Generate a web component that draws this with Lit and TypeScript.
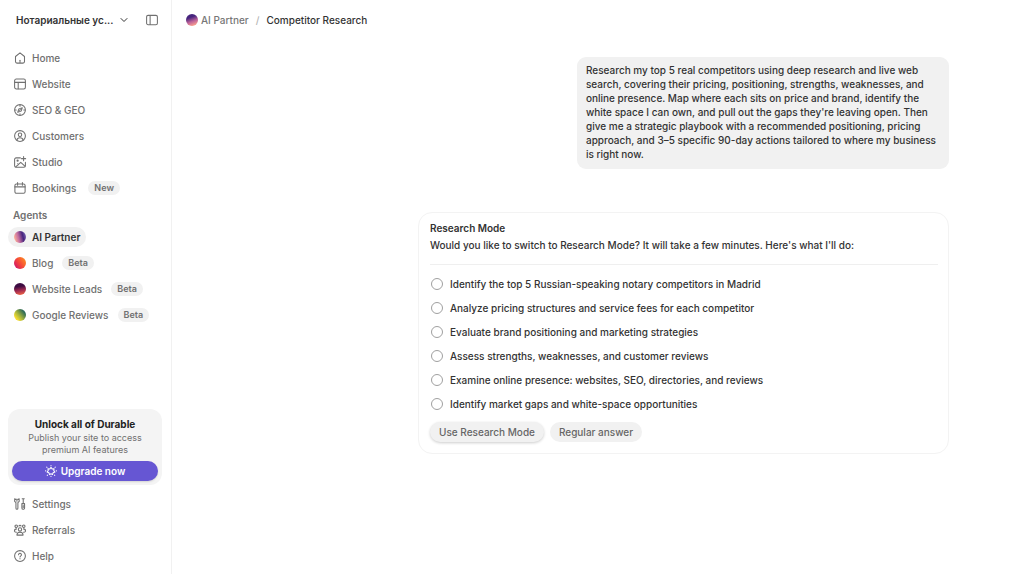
import { LitElement, html, css, svg, nothing } from "lit";
import { customElement, property } from "lit/decorators.js";
import { classMap } from "lit/directives/class-map.js";

const icons = {
  home: svg`<path d="M2 6 8 1.200l6 4.800v6.800a2 2 0 0 1-2 2H4a2 2 0 0 1-2-2z"/><path d="M8 11v3"/>`,
  website: svg`<rect x=".8" y="1.400" width="14.400" height="13.200" rx="2.200"/><path d="M.8 5.800h14.400M5.600 5.800v8.500"/>`,
  compass: svg`<circle cx="8" cy="8" r="7.200"/><path d="m11 5-1.500 4.500L5 11l1.500-4.500z"/><path d="M8 1.500v1.500M8 13v1.500M1.500 8h1.500M13 8h1.500M7.500 8.500l1-1"/>`,
  customers: svg`<circle cx="8" cy="8" r="7.200"/><circle cx="8" cy="6.300" r="2.300"/><path d="M3.800 13.500c.4-2.300 2-3.200 4.200-3.200s3.800.9 4.200 3.200"/>`,
  studio: svg`<path d="M8.500 2.500H2.800a2 2 0 0 0-2 2v8.500a2 2 0 0 0 2 2h10.400a2 2 0 0 0 2-2V8.500"/><path d="M12.800.8v5.500M10 3.500h5.500"/><circle cx="4.800" cy="6.300" r=".8"/><path d="m2.300 14.500 6.700-6 5.500 5M6 11.500 4.800 10.500"/>`,
  bookings: svg`<rect x="1.200" y="2.600" width="13.600" height="12.400" rx="2"/><path d="M1.200 6.500h13.600M4.800.8v3.500M11.200.8v3.500"/>`,
  settings: svg`<path d="M.9 1v3.500L2.600 6.200v7.400a1.300 1.300 0 0 0 2.600 0V6.200l1.700-1.700V1M3.900 1.500v2.700M.9 1l1.500 1M6.900 1 5.400 2"/><path d="M12.300 1v6.500M10.900 1h2.800M10.500 7.500h3.600v5.800a1.800 1.800 0 0 1-3.600 0zM12.300 10v2.500"/>`,
  referrals: svg`<circle cx="8" cy="7.300" r="2.200"/><path d="M3.900 14.800c0-2.400 1.600-3.800 4.100-3.800s4.100 1.400 4.100 3.800z"/><circle cx="3" cy="3" r="1.700"/><circle cx="13" cy="3" r="1.700"/><path d="M.6 9.500c0-1.800 1-3 2.800-3M15.400 9.500c0-1.800-1-3-2.800-3M1.500 10.600l1.800.4M14.500 10.600l-1.800.4M6.500 2.600 8 1.600l1.500 1"/>`,
  help: svg`<circle cx="8" cy="8" r="7.200"/><path d="M6.100 6.300a1.900 1.900 0 1 1 2.900 1.600c-.7.400-1 .7-1 1.400"/><path d="M8 11.400v.4"/>`,
  sparkle: svg`<path d="m8 3.200 1.500 2.200 2.600-.5-.4 2.600 1.600 1.900-2.500.9-.8 2.500L8 11.600l-2 1.200-.8-2.500-2.500-.9 1.600-1.900-.4-2.600 2.600.5z"/><path d="M8 .7v.3M8 14.900v.3M2.300 2.900l.3.300M13.700 2.900l-.3.300M.7 7.800H1M15 7.800h.3M3 13.800l.3-.3M13 13.800l-.3-.3"/>`,
  chevron: svg`<path stroke-width="2" d="m2 5 6 6 6-6"/>`,
  panel: svg`<rect x=".8" y="1.800" width="14.400" height="12.400" rx="2"/><path d="M5.500 2v12"/>`,
};

type IconName = keyof typeof icons;

@customElement("line-icon")
class LineIcon extends LitElement {
  @property() name: IconName = "home";

  static styles = css`
    :host {
      display: block;
      flex: none;
      width: 12px;
      height: 12px;
    }
    .glyph {
      display: block;
      width: 100%;
      height: 100%;
      fill: none;
      stroke: currentColor;
      stroke-width: 1.4;
      stroke-linecap: round;
      stroke-linejoin: round;
      overflow: visible;
    }
  `;

  render() {
    return html`<svg class="glyph" viewBox="0 0 16 16" aria-hidden="true">${icons[this.name]}</svg>`;
  }
}

interface NavItem {
  label: string;
  icon?: IconName;
  orb?: string;
  tag?: string;
  active?: boolean;
}

const primary: NavItem[] = [
  { label: "Home", icon: "home" },
  { label: "Website", icon: "website" },
  { label: "SEO & GEO", icon: "compass" },
  { label: "Customers", icon: "customers" },
  { label: "Studio", icon: "studio" },
  { label: "Bookings", icon: "bookings", tag: "New" },
];

const agents: NavItem[] = [
  { label: "AI Partner", orb: "partner", active: true },
  { label: "Blog", orb: "blog", tag: "Beta" },
  { label: "Website Leads", orb: "leads", tag: "Beta" },
  { label: "Google Reviews", orb: "reviews", tag: "Beta" },
];

const secondary: NavItem[] = [
  { label: "Settings", icon: "settings" },
  { label: "Referrals", icon: "referrals" },
  { label: "Help", icon: "help" },
];

const steps = [
  "Identify the top 5 Russian-speaking notary competitors in Madrid",
  "Analyze pricing structures and service fees for each competitor",
  "Evaluate brand positioning and marketing strategies",
  "Assess strengths, weaknesses, and customer reviews",
  "Examine online presence: websites, SEO, directories, and reviews",
  "Identify market gaps and white-space opportunities",
];

@customElement("app-root")
class AppRoot extends LitElement {
  static styles = css`
    :host {
      display: grid;
      grid-template-columns: 172px 1fr;
      min-height: 100vh;
      box-sizing: border-box;
      background: #fff;
      color: #333;
      font: 450 10px/14px Inter, "Liberation Sans", sans-serif;
    }
    * {
      box-sizing: border-box;
    }
    a {
      color: inherit;
      text-decoration: none;
    }
    button {
      border: 0;
      margin: 0;
      padding: 0;
      background: none;
      color: inherit;
      font: inherit;
      cursor: pointer;
    }
    h2,
    p,
    ul {
      margin: 0;
      padding: 0;
      list-style: none;
    }
    h2 {
      font-size: 10px;
      font-weight: 600;
    }

    .sidebar {
      display: flex;
      flex-direction: column;
      padding: 10px 9px 8px 8px;
      border-right: 1px solid #f1f1f1;
      color: #707070;
      font-weight: 500;
    }
    .workspace {
      display: flex;
      align-items: center;
      justify-content: space-between;
      height: 20px;
      padding: 0 4px 0 8px;
      margin-bottom: 18px;
    }
    .switcher {
      display: flex;
      align-items: center;
      gap: 7px;
      color: #333;
      font-weight: 600;
    }
    .toggle {
      color: #707070;
    }
    .chevron {
      width: 8px;
      height: 8px;
    }
    .list {
      display: flex;
      flex-direction: column;
      gap: 6px;
    }
    .row {
      display: flex;
      align-items: center;
      gap: 12px;
    }
    .agents .row {
      gap: 9px;
    }
    .link {
      display: flex;
      align-items: center;
      gap: 6px;
      height: 20px;
      padding: 0 6px;
      margin-right: -6px;
      border-radius: 10px;
    }
    .link.active {
      background: #f1f1f1;
      color: #333;
      font-weight: 600;
    }
    .tag {
      padding: 0 6px;
      border-radius: 7px;
      background: #f1f1f1;
      font-size: 9px;
      line-height: 14px;
      font-weight: 600;
    }
    .heading {
      margin: 10px 0 5px 5px;
      font-weight: 600;
    }
    .orb {
      flex: none;
      width: 12px;
      height: 12px;
      border-radius: 50%;
    }
    .partner {
      background: linear-gradient(75deg, #ffb199 10%, #c26c9f 40%, #45247d 70%, #8d7ac4);
    }
    .blog {
      background: linear-gradient(55deg, #c20a78, #f4443c 45%, #ff9a1c);
    }
    .leads {
      background: linear-gradient(-10deg, #ff7043, #a02a50 40%, #3d0c42 70%);
    }
    .reviews {
      background: linear-gradient(50deg, #f6dc32 20%, #a7b53c 45%, #2d6a58 80%);
    }
    .crumb {
      background: linear-gradient(-20deg, #ffa48c 10%, #c0649a 40%, #45247d 70%);
    }

    .upsell {
      margin: auto 0 9px;
      padding: 8px 4px 4px;
      border-radius: 12px;
      background: #f4f4f4;
      text-align: center;
      font-size: 9px;
      line-height: 12px;
      font-weight: 400;
    }
    .upsell h2 {
      color: #222;
      line-height: 14px;
      font-weight: 700;
    }
    .pitch {
      padding: 0 12px;
      margin: 1px 0 5px;
    }
    .upgrade {
      display: flex;
      align-items: center;
      justify-content: center;
      gap: 4px;
      width: 100%;
      height: 20px;
      border-radius: 10px;
      background: #6656d3;
      box-shadow: 0 1px 2px #0002;
      color: #fff;
      font-size: 10px;
      font-weight: 600;
    }

    .main {
      display: flex;
      flex-direction: column;
      min-width: 0;
    }
    .crumbs {
      display: flex;
      align-items: center;
      gap: 7px;
      height: 20px;
      margin: 10px 14px 27px;
      color: #777;
    }
    .crumbs a {
      display: flex;
      align-items: center;
      gap: 3px;
    }
    .slash {
      color: #b5b5b5;
    }
    .current {
      color: #333;
      font-weight: 500;
    }
    .thread {
      display: flex;
      flex-direction: column;
      align-items: flex-end;
      gap: 43px;
      width: 100%;
      max-width: 702px;
      margin: 0 auto;
    }
    .message {
      width: 53%;
      padding: 6px 9px 8px;
      border-radius: 9px;
      background: #f1f1f1;
    }
    .card {
      width: 100%;
      max-width: 531px;
      padding: 8px 10px 11px 11px;
      border: 1px solid #f3f3f3;
      border-radius: 14px;
    }
    .intro {
      padding: 3px 0 12px;
      margin-bottom: 12px;
      border-bottom: 1px solid #efefef;
    }
    .steps {
      display: flex;
      flex-direction: column;
      gap: 10px;
    }
    .step {
      display: flex;
      align-items: center;
      gap: 7px;
    }
    .mark {
      appearance: none;
      flex: none;
      width: 12px;
      height: 12px;
      margin: 0 0 0 1px;
      border: 1px solid #a0a0a0;
      border-radius: 50%;
    }
    .mark:checked {
      border: 4px solid #6656d3;
    }
    .actions {
      display: flex;
      gap: 6px;
      margin-top: 11px;
      color: #666;
      font-weight: 500;
    }
    .choice {
      height: 20px;
      padding: 0 9px;
      border-radius: 10px;
      background: #f1f1f1;
    }
    .raised {
      box-shadow: 0 1px 3px #0003;
    }
  `;

  private item(item: NavItem) {
    return html`<li class="row">
      <a class=${classMap({ link: true, active: !!item.active })} href="#">
        ${item.icon
          ? html`<line-icon name=${item.icon}></line-icon>`
          : html`<span class="orb ${item.orb}"></span>`}
        ${item.label}
      </a>
      ${item.tag ? html`<span class="tag">${item.tag}</span>` : nothing}
    </li>`;
  }

  private list(items: NavItem[], kind = "") {
    return html`<ul class="list ${kind}">${items.map((entry) => this.item(entry))}</ul>`;
  }

  render() {
    return html`
      <nav class="sidebar">
        <div class="workspace">
          <button class="switcher">
            Нотариальные ус...
            <line-icon class="chevron" name="chevron"></line-icon>
          </button>
          <button class="toggle" aria-label="Toggle sidebar"><line-icon name="panel"></line-icon></button>
        </div>
        ${this.list(primary)}
        <p class="heading">Agents</p>
        ${this.list(agents, "agents")}
        <section class="upsell">
          <h2>Unlock all of Durable</h2>
          <p class="pitch">Publish your site to access premium AI features</p>
          <button class="upgrade"><line-icon name="sparkle"></line-icon>Upgrade now</button>
        </section>
        ${this.list(secondary)}
      </nav>
      <main class="main">
        <nav class="crumbs">
          <a href="#"><span class="orb crumb"></span>AI Partner</a>
          <span class="slash">/</span>
          <span class="current">Competitor Research</span>
        </nav>
        <div class="thread">
          <p class="message">
            Research my top 5 real competitors using deep research and live web search, covering their pricing,
            positioning, strengths, weaknesses, and online presence. Map where each sits on price and brand, identify
            the white space I can own, and pull out the gaps they're leaving open. Then give me a strategic playbook
            with a recommended positioning, pricing approach, and 3–5 specific 90-day actions tailored to where my
            business is right now.
          </p>
          <section class="card">
            <h2>Research Mode</h2>
            <p class="intro">Would you like to switch to Research Mode? It will take a few minutes. Here's what I'll do:</p>
            <div class="steps">
              ${steps.map(
                (text) => html`<label class="step"><input class="mark" type="radio" name="step" />${text}</label>`
              )}
            </div>
            <div class="actions">
              <button class="choice raised">Use Research Mode</button>
              <button class="choice">Regular answer</button>
            </div>
          </section>
        </div>
      </main>
    `;
  }
}
